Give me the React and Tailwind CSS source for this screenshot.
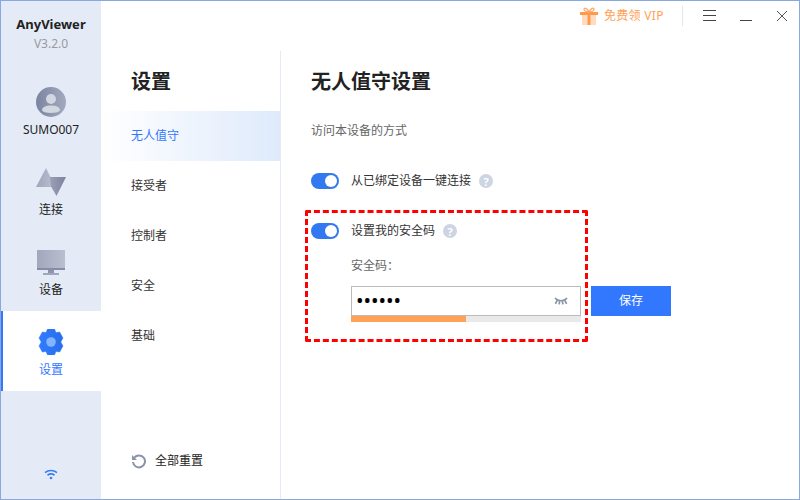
import { useState } from 'react';

const fontStack = "font-['Noto_Sans','Noto_Sans_CJK_SC',sans-serif]";

function UserIcon() {
    return (
        <svg width="30" height="30" viewBox="0 0 30 30">
            <defs>
                <linearGradient id="userGrad" x1="0" y1="0" x2="1" y2="0">
                    <stop offset="0" stopColor="#7c84a0" />
                    <stop offset="1" stopColor="#a3aabf" />
                </linearGradient>
            </defs>
            <circle cx="15" cy="15" r="15" fill="url(#userGrad)" />
            <circle cx="15" cy="12" r="5" fill="#d3d7e2" />
            <path d="M6 23.5c0-3.5 3.500-5 9-5s9 1.500 9 5c-2 1.800-5.500 2.500-9 2.500s-7-.7-9-2.500z" fill="#d3d7e2" />
        </svg>
    );
}

function ConnectIcon() {
    return (
        <svg width="30" height="29" viewBox="0 0 30 29">
            <defs>
                <linearGradient id="triA" x1="0" y1="0" x2="1" y2="0">
                    <stop offset="0" stopColor="#a0a6bb" />
                    <stop offset="1" stopColor="#bcc1d1" />
                </linearGradient>
                <linearGradient id="triB" x1="0" y1="0" x2="1" y2="0">
                    <stop offset="0" stopColor="#9ba1b6" />
                    <stop offset="1" stopColor="#7b829c" />
                </linearGradient>
            </defs>
            <path d="M10 0L0 19h19.500z" fill="url(#triA)" />
            <path d="M14 9h16L20.500 28 15 18.500z" fill="url(#triB)" />
        </svg>
    );
}

function DeviceIcon() {
    return (
        <svg width="28" height="25" viewBox="0 0 28 25">
            <defs>
                <linearGradient id="screenGrad" x1="0" y1="0" x2="1" y2="0">
                    <stop offset="0" stopColor="#a2a8bc" />
                    <stop offset="1" stopColor="#b9bfcf" />
                </linearGradient>
            </defs>
            <rect x="0" y="0" width="28" height="18" fill="url(#screenGrad)" />
            <rect x="0" y="18" width="28" height="2" fill="#858ca6" />
            <rect x="11" y="20" width="6" height="3" fill="#8d94ac" />
            <rect x="6" y="23" width="16" height="2" fill="#a0a6bb" />
        </svg>
    );
}

function GearIcon() {
    return (
        <svg width="26" height="26" viewBox="0 0 26 26">
            <defs>
                <linearGradient id="gearGrad" x1="0" y1="0" x2="1" y2="0">
                    <stop offset="0" stopColor="#2f7bff" />
                    <stop offset="1" stopColor="#2a6ee8" />
                </linearGradient>
            </defs>
            <path
                d="M9.500 0h7l1.500 3.500 3.700-.5L25 9l-2.200 4L25 17l-3.300 6-3.700-.5L16.500 26h-7L8 22.500l-3.700.5L1 17l2.200-4L1 9l3.300-6L8 3.500z"
                fill="url(#gearGrad)"
                stroke="#2f7bff"
                strokeWidth="0.5"
                strokeLinejoin="round"
            />
            <circle cx="13" cy="13" r="4.800" fill="#83b5ff" />
        </svg>
    );
}

function WifiIcon() {
    return (
        <svg width="14" height="11" viewBox="0 0 14 11" fill="none" stroke="#3b7cf5" strokeWidth="1.700">
            <path d="M1 3.600C4.500.8 9.500.8 13 3.600" />
            <path d="M3.500 6.200c2.100-1.500 4.900-1.500 7 0" />
            <circle cx="7" cy="9" r="1.300" fill="#3b7cf5" stroke="none" />
        </svg>
    );
}

function GiftIcon() {
    return (
        <svg width="18" height="18" viewBox="0 0 18 18">
            <rect x="2" y="6" width="14" height="12" fill="#ffdcc0" />
            <rect x="0" y="5" width="18" height="3" fill="#ff9a4d" />
            <rect x="7.500" y="5" width="3" height="13" fill="#ff9a4d" />
            <path d="M9 5C7 1 4.500.5 4 2s2 3 5 3zM9 5c2-4 4.500-4.500 5-3s-2 3-5 3z" fill="none" stroke="#ffa56a" strokeWidth="1.300" />
        </svg>
    );
}

function HelpBadge() {
    return (
        <span className="flex h-[14px] w-[14px] items-center justify-center rounded-full bg-[#cdd4e2] text-[11px] font-bold leading-none text-white">
            ?
        </span>
    );
}

function Toggle() {
    return (
        <span className="flex h-4 w-7 items-center justify-end rounded-full bg-[#3278f0] pr-[2px]">
            <span className="h-3 w-3 rounded-full bg-white" />
        </span>
    );
}

function EyeClosedIcon() {
    return (
        <svg width="15" height="8" viewBox="0 0 15 8" fill="none" stroke="#8b93a8" strokeWidth="1.800">
            <path d="M1 1c3.500 3.600 9.500 3.600 13 0" />
            <path d="M3.500 3.200L1.500 7M6 4.200L5.500 7.500M9 4.200l.5 3.300M11.500 3.200l2 3.800" />
        </svg>
    );
}

function ResetIcon() {
    return (
        <svg width="16" height="15" viewBox="0 0 16 15" fill="none" stroke="#8a93a9" strokeWidth="2">
            <path d="M3.400 3.500A6 6 0 1 1 2 8" />
            <path d="M1 1v5h5z" fill="#8a93a9" stroke="none" />
        </svg>
    );
}

function SideItem({ icon, label, active }) {
    return (
        <div
            className={`relative flex h-20 flex-col items-center pt-4 ${active ? 'bg-white text-[#3278ff]' : 'text-[#222222]'}`}
        >
            {active && <span className="absolute bottom-0 left-0 top-0 w-[2px] bg-[#3278ff]" />}
            <div className="flex h-[30px] items-center justify-center">{icon}</div>
            <span className="mt-[5px] text-xs leading-4">{label}</span>
        </div>
    );
}

export default function App() {
    const [menu] = useState(['接受者', '控制者', '安全', '基础']);

    return (
        <div className={`flex h-[500px] w-[800px] border border-[#8aa8e0] bg-white ${fontStack}`}>
            {/* left bar */}
            <div className="flex w-[100px] shrink-0 flex-col bg-[#e4ebf7]">
                <div className="flex h-[70px] flex-col items-center pt-[14px]">
                    <span className="text-[13px] font-bold leading-[18px] text-[#222222]">AnyViewer</span>
                    <span className="mt-[3px] text-xs leading-4 text-[#9a9a9a]">V3.2.0</span>
                </div>
                <SideItem icon={<UserIcon />} label="SUMO007" />
                <SideItem icon={<ConnectIcon />} label="连接" />
                <SideItem icon={<DeviceIcon />} label="设备" />
                <SideItem icon={<GearIcon />} label="设置" active />
                <div className="mt-auto flex justify-center pb-[19px]">
                    <WifiIcon />
                </div>
            </div>

            <div className="flex min-w-0 flex-1 flex-col">
                {/* title bar */}
                <div className="flex h-[50px] shrink-0 items-start pl-[479px] pt-[5px]">
                    <div className="flex h-5 items-center">
                        <GiftIcon />
                        <span className="ml-[6px] text-xs leading-4 tracking-[0.3px] text-[#ff9f59]">免费领 VIP</span>
                    </div>
                    <span className="ml-[18px] h-5 w-px bg-[#e3e6ee]" />
                    <div className="ml-5 mt-1 flex w-[13px] flex-col gap-1">
                        <span className="h-px bg-[#444444]" />
                        <span className="h-px bg-[#444444]" />
                        <span className="h-px bg-[#444444]" />
                    </div>
                    <span className="ml-6 mt-[14px] h-px w-3 bg-[#444444]" />
                    <svg className="ml-[25px] mt-[5px]" width="10" height="10" viewBox="0 0 10 10" stroke="#555555">
                        <path d="M0 0l10 10M10 0L0 10" />
                    </svg>
                </div>

                <div className="flex min-h-0 flex-1">
                    {/* settings menu */}
                    <div className="flex w-[180px] shrink-0 flex-col border-r border-[#e4ebf7] pb-[30px]">
                        <h2 className="flex h-[60px] items-center pt-[1px] pl-[30px] text-xl font-bold text-[#222222]">设置</h2>
                        <div className="flex h-[50px] items-center bg-gradient-to-r from-white to-[#deeafb] pl-[30px] text-xs text-[#3278ff]">
                            无人值守
                        </div>
                        {menu.map((item) => (
                            <div key={item} className="flex h-[50px] items-center pl-[30px] text-xs text-[#333333]">
                                {item}
                            </div>
                        ))}
                        <div className="mt-auto flex items-center pl-[30px] text-xs text-[#222222]">
                            <ResetIcon />
                            <span className="ml-2">全部重置</span>
                        </div>
                    </div>

                    {/* main panel */}
                    <div className="flex-1 pl-[30px]">
                        <h1 className="flex h-[60px] items-center pt-[1px] text-xl font-bold text-[#222222]">无人值守设置</h1>
                        <p className="mt-3 text-xs leading-4 text-[#666666]">访问本设备的方式</p>
                        <div className="mt-[34px] flex h-4 items-center">
                            <Toggle />
                            <span className="ml-3 text-xs text-[#333333]">从已绑定设备一键连接</span>
                            <span className="ml-2">
                                <HelpBadge />
                            </span>
                        </div>
                        {/* highlighted area */}
                        <div className="ml-[-6px] mt-[21px] h-[132px] w-[283px] rounded-[2px] border-[3px] border-dashed border-[#ff0000] pl-[3px] pt-[10px]">
                            <div className="flex h-4 items-center">
                                <Toggle />
                                <span className="ml-3 text-xs text-[#333333]">设置我的安全码</span>
                                <span className="ml-2">
                                    <HelpBadge />
                                </span>
                            </div>
                            <p className="ml-10 mt-[19px] text-xs leading-4 text-[#666666]">安全码：</p>
                            <div className="ml-10 mt-3 flex w-[320px]">
                                <div className="w-[230px] shrink-0">
                                    <div className="flex h-[30px] items-center border border-[#bbbbbb] pl-1 pr-3">
                                        <input
                                            type="password"
                                            value="123456"
                                            readOnly
                                            className="w-full min-w-0 bg-transparent text-[20px] text-black outline-none"
                                        />
                                        <EyeClosedIcon />
                                    </div>
                                    <div className="h-[6px] bg-[#e9e9e9]">
                                        <div className="h-full w-1/2 bg-[#ffa257]" />
                                    </div>
                                </div>
                                <button className="ml-[10px] h-[30px] w-20 shrink-0 bg-[#3278ff] text-xs text-white">保存</button>
                            </div>
                        </div>
                    </div>
                </div>
            </div>
        </div>
    );
}
